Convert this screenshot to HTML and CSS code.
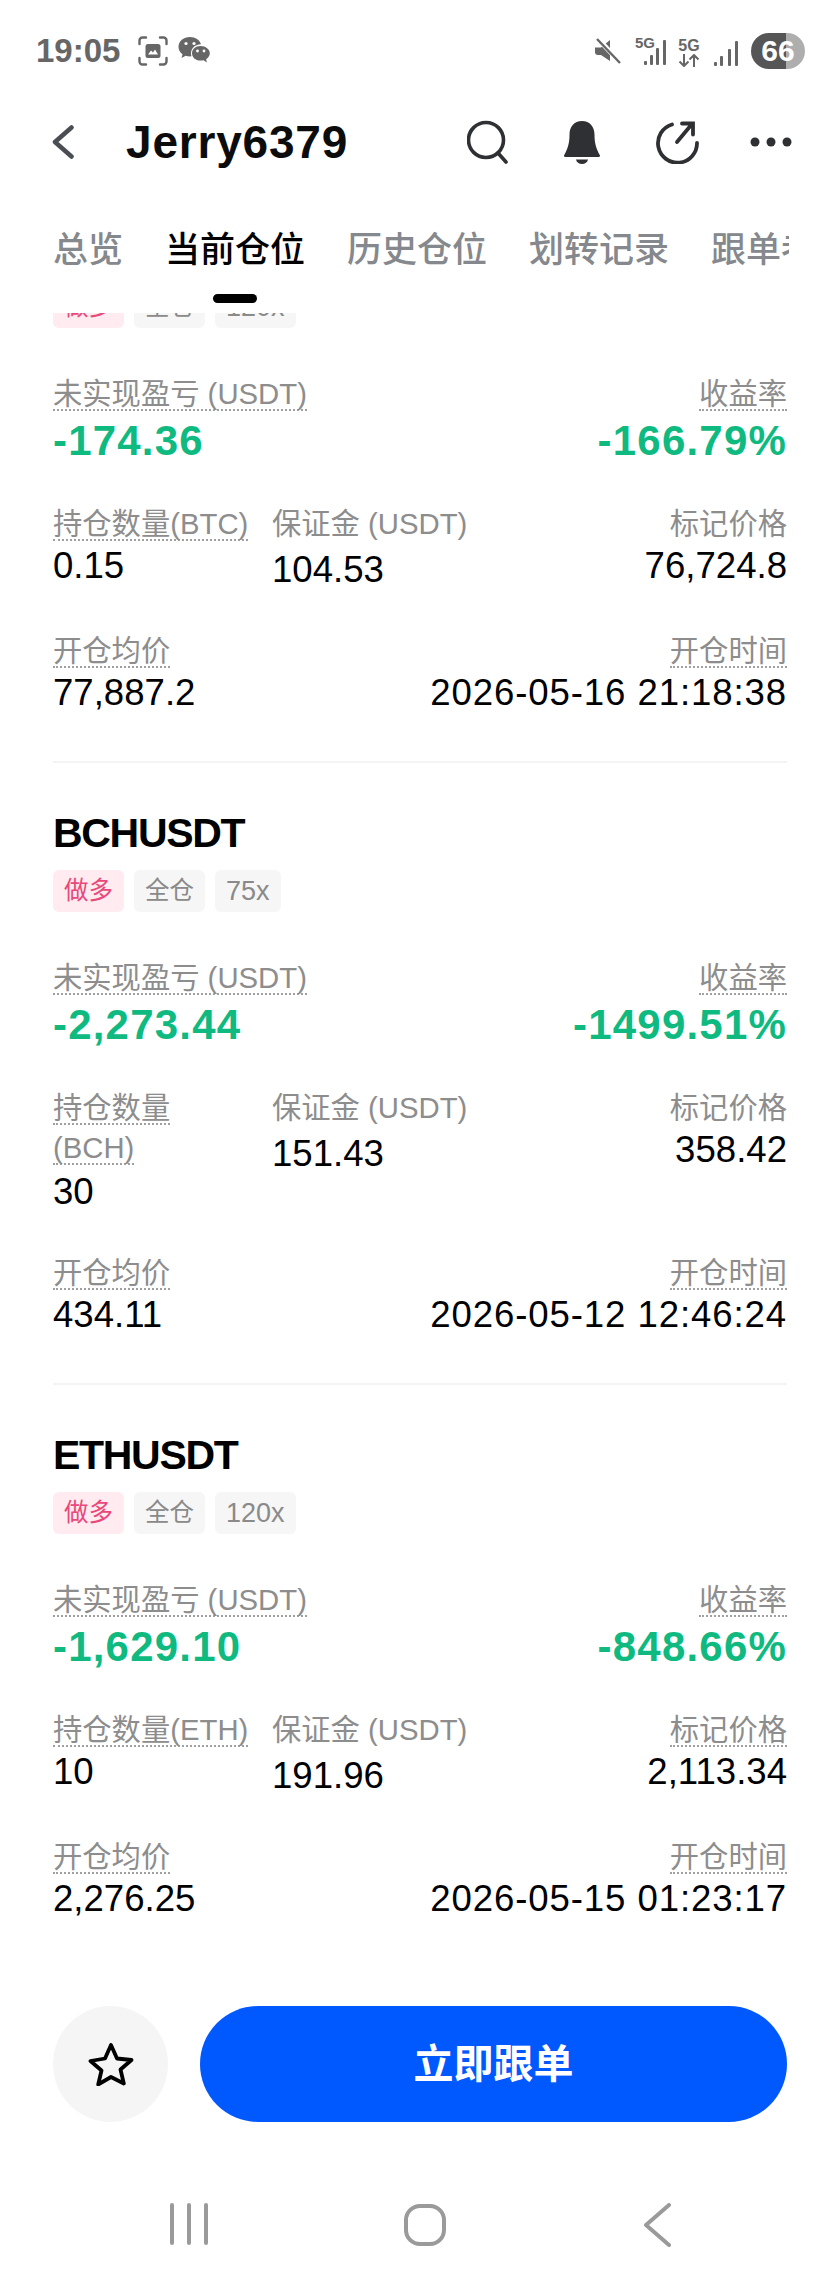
FILE: index.html
```html
<!DOCTYPE html>
<html lang="zh-CN">
<head>
  <meta charset="UTF-8">
  <meta name="viewport" content="width=device-width, initial-scale=1.0">
  <title>Jerry6379</title>
  <link rel="stylesheet" href="styles.css">
</head>
<body>
  <div class="app">
    <!-- 状态栏 -->
    <div class="status">
      <span class="time">19:05</span>
      <svg class="st-shot" width="30" height="30" viewBox="0 0 30 30" fill="none" stroke="#666" stroke-width="2.4" stroke-linecap="round">
        <path d="M1.5 8V4.5a3 3 0 0 1 3-3H8M22 1.5h3.5a3 3 0 0 1 3 3V8M28.500 22v3.500a3 3 0 0 1-3 3H22M8 28.500H4.500a3 3 0 0 1-3-3V22"/>
        <rect x="7.500" y="8" width="15" height="14" rx="2.500" fill="#666" stroke="none"/>
        <path d="M10 18.500l3-4 2 2 2-3 3 5z" fill="#fff" stroke="none"/>
      </svg>
      <svg class="st-wx" width="32" height="28" viewBox="0 0 32 28">
        <path d="M12 0C5.500 0 .5 4.300.5 9.800c0 3 1.500 5.600 4 7.400L3.500 21l4.200-2.200c1.300.4 2.800.6 4.300.6.500 0 1 0 1.500-.1-.3-1-.5-1.900-.5-2.900C13 11 17.500 7.500 23 7.300 21.700 3 17.300 0 12 0z" fill="#666"/>
        <path d="M22.500 9C17.300 9 14 12.300 14 16.300s3.300 7.300 8.500 7.300c1 0 2-.1 3-.4L29 25.500l-.9-3.300c2.300-1.400 3.700-3.500 3.700-5.900C31.800 12.300 27.700 9 22.500 9z" fill="#666"/>
        <circle cx="8" cy="6.500" r="1.600" fill="#fff"/><circle cx="16" cy="6.500" r="1.600" fill="#fff"/>
        <circle cx="19.500" cy="14" r="1.400" fill="#fff"/><circle cx="26" cy="14" r="1.400" fill="#fff"/>
      </svg>
      <div class="status-right">
        <svg class="st-mute" width="26" height="26" viewBox="0 0 26 26">
          <path d="M0 9.500h6l9-7.500v21l-9-6H3a3 3 0 0 1-3-3z" fill="#666"/>
          <path d="M3 1l22 23" stroke="#fff" stroke-width="5"/>
          <path d="M2 1l23 24" stroke="#666" stroke-width="2.400"/>
        </svg>
        <div class="sig sig-5g">
          <span class="g5">5G</span>
          <svg width="33" height="28" viewBox="0 0 33 28" fill="#666">
            <rect x="9" y="23" width="3" height="4" rx="1"/><rect x="15" y="17" width="3" height="10" rx="1"/><rect x="21" y="10" width="3" height="17" rx="1"/><rect x="28" y="2" width="3" height="25" rx="1"/>
          </svg>
        </div>
        <div class="sig-arrows">
          <span class="g5">5G</span>
          <svg width="22" height="13" viewBox="0 0 22 13" fill="none" stroke="#666" stroke-width="2">
            <path d="M6 0v12M1.500 7.500L6 12l4.500-4.500M16 13V1M11.500 5.500L16 1l4.500 4.500"/>
          </svg>
        </div>
        <svg class="st-bars" width="25" height="25" viewBox="0 0 25 25" fill="#666">
          <rect x="0" y="21" width="3" height="4" rx="1"/><rect x="6" y="15" width="3" height="10" rx="1"/><rect x="14" y="8" width="3" height="17" rx="1"/><rect x="21" y="0" width="3" height="25" rx="1"/>
        </svg>
        <div class="battery"><span class="battery-num">66</span></div>
      </div>
    </div>

    <!-- 标题栏 -->
    <div class="nav">
      <svg class="back" width="22" height="34" viewBox="0 0 22 34" fill="none" stroke="#4a4d52" stroke-width="4.500" stroke-linecap="round" stroke-linejoin="round"><path d="M19.500 2.500L3 17l16.500 14.500"/></svg>
      <span class="nav-title">Jerry6379</span>
      <div class="nav-icons">
        <svg class="ic-search" width="44" height="44" viewBox="0 0 44 44" fill="none" stroke="#2e3033" stroke-width="3.600" stroke-linecap="round"><circle cx="19" cy="20" r="17.500"/><path d="M31 33l8 9"/></svg>
        <svg class="ic-bell" width="44" height="44" viewBox="0 0 44 44" fill="#2e3033"><path d="M21 1c-8 0-12.500 6-12.500 13.500 0 8-1.200 13-5.500 21 0 .8.400 1.500 1.500 1.500h33c1.100 0 1.500-.7 1.500-1.500-4.300-8-5.500-13-5.500-21C33.500 7 29 1 21 1z"/><path d="M15 39.500h12c-.5 2.800-3 4.500-6 4.500s-5.500-1.700-6-4.500z"/></svg>
        <svg width="44" height="44" viewBox="0 0 44 44" fill="none" stroke="#2e3033" stroke-width="3.800" stroke-linecap="round"><path d="M16 4.500A19.500 19.500 0 1 0 41 23"/><path d="M21 22L36 4M26 3.500h11v11"/></svg>
        <svg width="44" height="44" viewBox="0 0 44 44" fill="#2e3033"><circle cx="6" cy="22" r="4.500"/><circle cx="22" cy="22" r="4.500"/><circle cx="38" cy="22" r="4.500"/></svg>
      </div>
    </div>

    <!-- tab -->
    <div class="tabs">
      <span class="tab">总览</span>
      <span class="tab tab-on">当前仓位</span>
      <span class="tab">历史仓位</span>
      <span class="tab">划转记录</span>
      <span class="tab">跟单者</span>
    </div>

    <!-- 仓位列表，已向下滚动 -->
    <div class="list">
      <div class="list-inner">
        <div class="card">
          <div class="tags"><span class="tag tag-long">做多</span><span class="tag">全仓</span><span class="tag tag-num">120x</span></div>
          <div class="row">
            <div class="cell"><span class="lbl">未实现盈亏 (USDT)</span><div class="pnl">-174.36</div></div>
            <div class="cell cell-r"><span class="lbl">收益率</span><div class="pnl">-166.79%</div></div>
          </div>
          <div class="row row-two">
            <div class="cell cell-a"><span class="lbl">持仓数量(BTC)</span><div class="val">0.15</div></div>
            <div class="cell cell-b"><span class="lbl lbl-plain">保证金 (USDT)</span><div class="val val-low">104.53</div></div>
            <div class="cell cell-r"><span class="lbl lbl-plain">标记价格</span><div class="val">76,724.8</div></div>
          </div>
          <div class="row row-three">
            <div class="cell"><span class="lbl">开仓均价</span><div class="val">77,887.2</div></div>
            <div class="cell cell-r"><span class="lbl">开仓时间</span><div class="val val-time">2026-05-16 21:18:38</div></div>
          </div>
        </div>

        <div class="card">
          <div class="sym">BCHUSDT</div>
          <div class="tags"><span class="tag tag-long">做多</span><span class="tag">全仓</span><span class="tag tag-num">75x</span></div>
          <div class="row">
            <div class="cell"><span class="lbl">未实现盈亏 (USDT)</span><div class="pnl">-2,273.44</div></div>
            <div class="cell cell-r"><span class="lbl">收益率</span><div class="pnl">-1499.51%</div></div>
          </div>
          <div class="row row-two">
            <div class="cell cell-a"><span class="lbl">持仓数量</span><span class="lbl lbl-wrap">(BCH)</span><div class="val val-wrap">30</div></div>
            <div class="cell cell-b"><span class="lbl lbl-plain">保证金 (USDT)</span><div class="val val-low">151.43</div></div>
            <div class="cell cell-r"><span class="lbl lbl-plain">标记价格</span><div class="val">358.42</div></div>
          </div>
          <div class="row row-three">
            <div class="cell"><span class="lbl">开仓均价</span><div class="val">434.11</div></div>
            <div class="cell cell-r"><span class="lbl">开仓时间</span><div class="val val-time">2026-05-12 12:46:24</div></div>
          </div>
        </div>

        <div class="card card-last">
          <div class="sym">ETHUSDT</div>
          <div class="tags"><span class="tag tag-long">做多</span><span class="tag">全仓</span><span class="tag tag-num">120x</span></div>
          <div class="row">
            <div class="cell"><span class="lbl">未实现盈亏 (USDT)</span><div class="pnl">-1,629.10</div></div>
            <div class="cell cell-r"><span class="lbl">收益率</span><div class="pnl">-848.66%</div></div>
          </div>
          <div class="row row-two">
            <div class="cell cell-a"><span class="lbl">持仓数量(ETH)</span><div class="val">10</div></div>
            <div class="cell cell-b"><span class="lbl lbl-plain">保证金 (USDT)</span><div class="val val-low">191.96</div></div>
            <div class="cell cell-r"><span class="lbl">标记价格</span><div class="val">2,113.34</div></div>
          </div>
          <div class="row row-three">
            <div class="cell"><span class="lbl">开仓均价</span><div class="val">2,276.25</div></div>
            <div class="cell cell-r"><span class="lbl">开仓时间</span><div class="val val-time">2026-05-15 01:23:17</div></div>
          </div>
        </div>
      </div>
    </div>

    <!-- 底部按钮 -->
    <div class="actions">
      <div class="fav">
        <svg width="46" height="44" viewBox="0 0 46 44" fill="none" stroke="#000" stroke-width="3.800" stroke-linejoin="round"><path d="M23 3l6 13.500 14.500 1.500-11 9.500 3.300 14L23 35l-12.800 7.500 3.300-14-11-9.500L17 16.500z"/></svg>
      </div>
      <div class="follow">立即跟单</div>
    </div>

    <!-- 系统导航 -->
    <div class="sysnav">
      <svg width="38" height="42" viewBox="0 0 38 42" fill="none" stroke="#9a9a9a" stroke-width="4" stroke-linecap="round"><path d="M2 2v38M19 2v38M36 2v38"/></svg>
      <svg class="sys-home" width="44" height="44" viewBox="0 0 44 44" fill="none" stroke="#9a9a9a" stroke-width="4"><rect x="3" y="3" width="38" height="38" rx="14"/></svg>
      <svg class="sys-back" width="28" height="44" viewBox="0 0 28 44" fill="none" stroke="#9a9a9a" stroke-width="4" stroke-linecap="round" stroke-linejoin="round"><path d="M26 2L3 22l23 20"/></svg>
    </div>
  </div>
</body>
</html>
```

FILE: styles.css
```css
*{margin:0;padding:0;box-sizing:border-box;}
body{background:#fff;font-family:"Liberation Sans","Noto Sans CJK SC",sans-serif;color:#000;}
.app{width:840px;height:2289px;display:flex;flex-direction:column;overflow:hidden;background:#fff;}

/* 状态栏 */
.status{height:102px;display:flex;align-items:center;padding:0 35px 0 36px;color:#666;flex-shrink:0;}
.time{font-size:33px;font-weight:700;width:84px;white-space:nowrap;}
.st-shot{margin-left:18px;}
.st-wx{margin-left:10px;}
.status-right{margin-left:auto;display:flex;align-items:center;}
.st-mute{margin-right:14px;}
.sig{position:relative;width:33px;height:28px;margin-top:2px;}
.g5{font-weight:700;color:#666;display:block;}
.sig .g5{position:absolute;left:0;top:-2px;font-size:15px;line-height:13px;}
.sig-arrows{margin-left:10px;display:flex;flex-direction:column;align-items:center;width:22px;margin-top:2px;}
.sig-arrows .g5{font-size:16px;line-height:15px;margin-bottom:1px;}
.st-bars{margin-left:14px;margin-top:4px;}
.battery{margin-left:12px;width:54px;height:36px;border-radius:18px;background:linear-gradient(90deg,#565656 65%,#aeaeae 65%);display:flex;align-items:center;justify-content:center;}
.battery-num{color:#fff;font-size:30px;font-weight:700;}

/* 标题栏 */
.nav{height:80px;display:flex;align-items:center;padding:0 47px 0 52px;flex-shrink:0;}
.nav-title{font-size:46px;font-weight:700;letter-spacing:.8px;color:#0c0c0c;margin-left:52px;}
.nav-icons{margin-left:auto;display:flex;gap:49px;}
.ic-search{margin-right:1px;}
.ic-bell{margin-right:2px;}

/* tab */
.tabs{height:131px;flex-shrink:0;width:789px;padding:48px 0 0 53px;display:flex;gap:42px;overflow:hidden;font-size:35px;line-height:40px;color:#85888c;white-space:nowrap;}
.tab{position:relative;flex-shrink:0;font-weight:500;}
.tab-on{color:#000;}
.tab-on::after{content:"";position:absolute;left:50%;top:64px;width:44px;height:9px;margin-left:-22px;border-radius:5px;background:#000;}

/* 列表 */
.list{flex:1;overflow:hidden;}
.list-inner{margin-top:-75px;}
.card{margin:0 53px;padding:48px 0 48px;border-bottom:2px solid #f4f4f4;}
.card-last{border-bottom:0;}
.sym{font-size:41px;line-height:44px;font-weight:700;letter-spacing:-1.3px;margin-bottom:15px;}
.tags{display:flex;gap:10px;}
.tag{height:42px;line-height:42px;padding:0 11px;text-align:center;border-radius:6px;background:#f6f6f6;color:#8a8a8a;font-size:24.5px;}
.tag-num{font-size:27px;}
.tag-long{background:#ffebf0;color:#e8497a;}
.row{display:flex;justify-content:space-between;margin-top:51px;}
.row-two{margin-top:48px;}
.row-three{margin-top:46px;}
.cell{display:flex;flex-direction:column;align-items:flex-start;}
.cell-a{width:219px;flex-shrink:0;}
.cell-b{flex:1;}
.cell-r{align-items:flex-end;margin-left:auto;}
.lbl{display:block;font-size:29.3px;line-height:30px;border-bottom:2px dotted #a0a0a0;color:#8d8d8d;white-space:nowrap;}
.lbl-plain{border-bottom-color:transparent;}
.lbl-wrap{margin-top:8px;}
.pnl{font-size:42px;line-height:40px;font-weight:700;letter-spacing:1.2px;color:#0fba81;margin-top:10px;}
.val{font-size:36.6px;line-height:40px;margin-top:5px;color:#000;white-space:nowrap;}
.val-time{letter-spacing:.9px;}
.val-low{margin-top:9px;}
.val-wrap{margin-top:7px;}

/* 底部 */
.actions{height:116px;margin-bottom:64px;padding:0 53px;display:flex;gap:32px;flex-shrink:0;}
.fav{width:115px;height:116px;border-radius:50%;background:#f5f5f5;display:flex;align-items:center;justify-content:center;}
.follow{flex:1;border-radius:58px;background:#0058ff;color:#fff;font-size:40px;font-weight:700;line-height:1;display:flex;align-items:center;justify-content:center;}
.sysnav{height:103px;flex-shrink:0;display:flex;align-items:flex-start;padding:17px 0 0 170px;}
.sys-home{margin-left:195px;}
.sys-back{margin-left:196px;}
```
